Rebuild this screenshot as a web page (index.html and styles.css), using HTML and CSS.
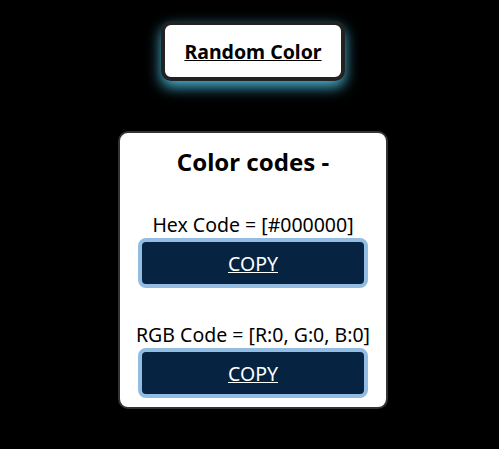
FILE: index.html
```html
<!DOCTYPE html>
<html>
<head>
<meta charset="utf-8">
<link rel="stylesheet" href="styles.css">
</head>
<body>
<main class="page">
  <button class="random-btn">Random Color</button>
  <section class="card">
    <h2 class="card-title">Color codes -</h2>
    <p class="code-label hex-label">Hex Code = [#000000]</p>
    <button class="copy-btn">COPY</button>
    <p class="code-label rgb-label">RGB Code = [R:0, G:0, B:0]</p>
    <button class="copy-btn">COPY</button>
  </section>
</main>
</body>
</html>
```

FILE: styles.css
```css
html, body {
  margin: 0;
  padding: 0;
  background: #000;
}
body {
  font-family: "Noto Sans", "Open Sans", sans-serif;
  color: #000;
}
.page {
  display: flex;
  flex-direction: column;
  align-items: center;
  padding-top: 21px;
  padding-left: 7px;
}
.random-btn {
  width: 184px;
  height: 60px;
  box-sizing: border-box;
  background: #fff;
  border: 4px solid #222;
  border-radius: 10px;
  font-family: inherit;
  font-size: 19.5px;
  font-weight: 700;
  text-decoration: underline;
  color: #000;
  box-shadow: 0 6px 14px rgba(80, 200, 235, 0.9);
  padding: 0;
}
.card {
  margin-top: 50px;
  width: 270px;
  height: 278px;
  box-sizing: border-box;
  background: #fff;
  border: 2px solid #333;
  border-radius: 10px;
  padding: 0 18px;
  display: flex;
  flex-direction: column;
  align-items: center;
}
.card-title {
  margin: 13px 0 0;
  font-size: 24px;
  font-weight: 700;
  line-height: 32px;
}
.code-label {
  margin: 0;
  font-size: 19.5px;
  line-height: 27px;
  white-space: nowrap;
}
.hex-label {
  margin-top: 33px;
}
.rgb-label {
  margin-top: 33px;
}
.copy-btn {
  margin-top: 0;
  width: 230px;
  height: 50px;
  flex-shrink: 0;
  box-sizing: border-box;
  background: #062442;
  border: 4px solid #93bce3;
  border-radius: 8px;
  color: #fff;
  font-family: inherit;
  font-size: 19.5px;
  text-decoration: underline;
  padding: 0;
}
```
